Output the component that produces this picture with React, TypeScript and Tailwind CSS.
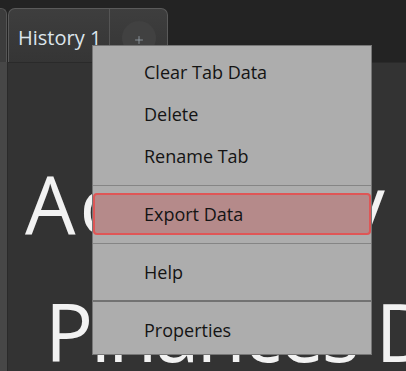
import { Plus } from 'lucide-react';

type MenuEntry = { label: string; active?: boolean } | { separator: true; thick?: boolean };

const entries: MenuEntry[] = [
  { label: 'Clear Tab Data' },
  { label: 'Delete' },
  { label: 'Rename Tab' },
  { separator: true },
  { label: 'Export Data', active: true },
  { separator: true },
  { label: 'Help' },
  { separator: true, thick: true },
  { label: 'Properties' },
];

function ContextMenu() {
  return (
    <div className="absolute left-[92px] top-[45px] w-[280px] border border-[#767676] bg-[#adadad] pt-[5px] pb-[3px]">
      {entries.map((entry, i) =>
        'separator' in entry ? (
          <div key={i} className="flex h-[16px] items-center">
            <div className={entry.thick ? 'h-[2px] w-full bg-[#727272]' : 'h-px w-full bg-[#858585]'} />
          </div>
        ) : (
          <div
            key={i}
            className={
              entry.active
                ? 'flex h-[42px] items-center rounded-[4px] border-2 border-[#df5656] bg-[#b58a8a] pl-[49px] text-[18px] text-[#141414]'
                : 'flex h-[42px] items-center pl-[51px] text-[18px] text-[#141414]'
            }
          >
            {entry.label}
          </div>
        )
      )}
    </div>
  );
}

export default function App() {
  return (
    <div className="relative flex h-[371px] w-[406px] flex-col overflow-hidden bg-[#232323] font-['Open_Sans',sans-serif]">
      {/* tab strip */}
      <div className="flex h-[62px] shrink-0 items-end">
        <div className="h-[54px] w-[7px] rounded-tr-[6px] border-r border-t border-[#555] bg-[#3c3c3c]" />
        <div className="ml-px flex h-[54px] w-[160px] rounded-t-[7px] border-x border-t border-[#5a5a5a] bg-gradient-to-b from-[#3e3e3e] to-[#353535]">
          <div className="flex w-[101px] items-center border-r border-[#555] pl-[9px] pt-[4px] text-[20px] text-[#dce5ec]">
            History 1
          </div>
          <div className="flex flex-1 items-center justify-center">
            <div className="mt-[4px] flex h-[34px] w-[34px] items-center justify-center rounded-full bg-[#414141]">
              <Plus className="mt-[4px] h-[12px] w-[12px] text-[#9aa4ad]" strokeWidth={1.6} />
            </div>
          </div>
        </div>
      </div>

      {/* content panel */}
      <div className="flex flex-1 bg-[#474747]">
        <div className="w-[7px] shrink-0" />
        <div className="flex-1 border-l border-t border-[#2a2a2a] bg-[#333333] pt-[76px] text-[80px] leading-[128px] whitespace-nowrap text-[#f2f2f2]">
          <div className="pl-[17px] tracking-[4px]">Accuracy</div>
          <div className="pl-[37px] tracking-[-2.5px]">Pinances Dashboard</div>
        </div>
      </div>

      <ContextMenu />
    </div>
  );
}
